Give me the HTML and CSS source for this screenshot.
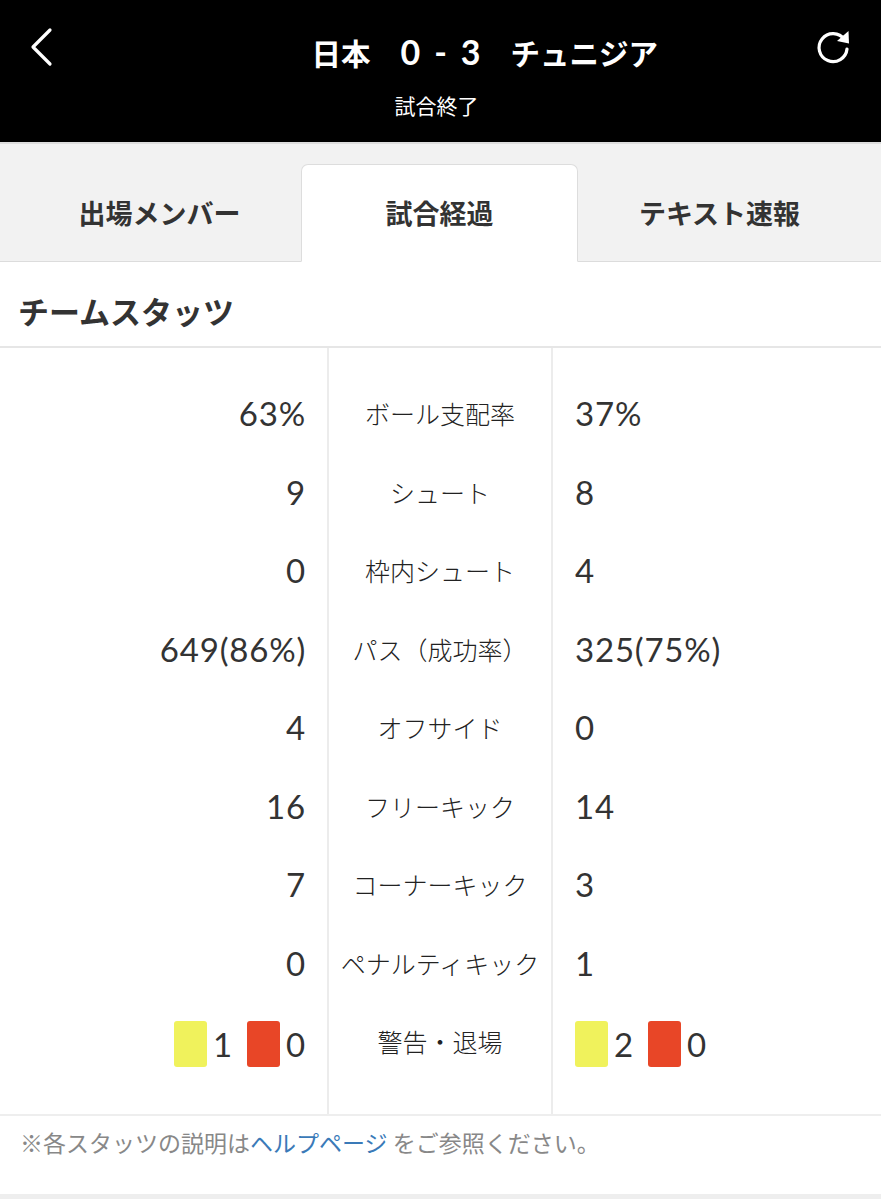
FILE: index.html
```html
<html>
<head>
    <title>日本 0-3 チュニジア</title>
    <link rel="stylesheet" href="styles.css">
</head>
<body>
<div class="header">
    <a class="back-btn">
        <svg width="40" height="50" viewBox="0 0 40 50">
            <polyline points="29,13 12,30 29,47" fill="none" stroke="#fff" stroke-width="3.2" stroke-linecap="round" stroke-linejoin="round"/>
        </svg>
    </a>
    <div class="match">
        <div class="score-line">
            <span class="team home">日本</span>
            <span class="score">0<i>-</i>3</span>
            <span class="team away">チュニジア</span>
        </div>
        <div class="status">試合終了</div>
    </div>
    <a class="reload-btn">
        <svg width="44" height="44" viewBox="0 0 44 44">
            <path d="M33.5 15.5 A14 14 0 1 0 36 25" fill="none" stroke="#fff" stroke-width="3.2" stroke-linecap="round"/>
            <polygon points="37.5,7 38,19.5 26,17" fill="#fff"/>
        </svg>
    </a>
</div>
<div class="tabs">
    <div class="tab">出場メンバー</div>
    <div class="tab active">試合経過</div>
    <div class="tab">テキスト速報</div>
</div>
<div class="section-title">チームスタッツ</div>
<div class="stats">
    <div class="col col-home">
        <div class="cell">63%</div>
        <div class="cell">9</div>
        <div class="cell">0</div>
        <div class="cell">649(86%)</div>
        <div class="cell">4</div>
        <div class="cell">16</div>
        <div class="cell">7</div>
        <div class="cell">0</div>
        <div class="cell card-cell">
            <span class="card yellow"></span><span>1</span>
            <span class="card red"></span><span>0</span>
        </div>
    </div>
    <div class="col col-label">
        <div class="cell">ボール支配率</div>
        <div class="cell">シュート</div>
        <div class="cell">枠内シュート</div>
        <div class="cell">パス（成功率）</div>
        <div class="cell">オフサイド</div>
        <div class="cell">フリーキック</div>
        <div class="cell">コーナーキック</div>
        <div class="cell">ペナルティキック</div>
        <div class="cell card-cell">警告・退場</div>
    </div>
    <div class="col col-away">
        <div class="cell">37%</div>
        <div class="cell">8</div>
        <div class="cell">4</div>
        <div class="cell">325(75%)</div>
        <div class="cell">0</div>
        <div class="cell">14</div>
        <div class="cell">3</div>
        <div class="cell">1</div>
        <div class="cell card-cell">
            <span class="card yellow"></span><span>2</span>
            <span class="card red"></span><span>0</span>
        </div>
    </div>
</div>
<div class="note">※各スタッツの説明は<a href="#">ヘルプページ</a> をご参照ください。</div>
<div class="bottom-bar"></div>
</body>
</html>
```

FILE: styles.css
```css
body{
    margin: 0;
    background: #fff;
    font-family: "Noto Sans CJK JP", sans-serif;
    color: #333;
}
.header{
    background: #000;
    height: 142px;
    display: flex;
    align-items: flex-start;
    justify-content: space-between;
    color: #fff;
}
.back-btn{
    display: block;
    margin: 17px 0 0 21px;
    width: 70px;
}
.reload-btn{
    display: block;
    margin: 24px 26px 0 0;
    width: 44px;
    text-align: right;
}
/* stretched back to full page width so everything centres on the page */
.match{
    flex: 1;
    padding-top: 27px;
    margin: 0 -70px 0 -91px;
}
.score-line{
    display: grid;
    grid-template-columns: 1fr auto 1fr;
    align-items: center;
    column-gap: 30px;
    font-size: 29.5px;
    font-weight: 700;
    line-height: 50px;
}
.team.home{
    text-align: right;
}
.team.away{
    text-align: left;
}
.score{
    font-family: Lato, "Noto Sans CJK JP", sans-serif;
    font-size: 34px;
    font-weight: 700;
}
.score i{
    font-style: normal;
    padding: 0 14px;
}
.status{
    text-align: center;
    font-size: 21px;
    line-height: 30px;
    margin-top: 13px;
    padding-right: 8px;
}
.tabs{
    background: #f2f2f2;
    border-top: 2px solid #ddd;
    border-bottom: 1px solid #dcdcdc;
    height: 117px;
    padding: 0 23px 0 21px;
    display: grid;
    grid-template-columns: 277px 277px 277px;
    justify-content: space-between;
    align-items: end;
}
.tab{
    height: 98px;
    margin-bottom: -1px;
    display: flex;
    align-items: center;
    justify-content: center;
    font-size: 27px;
    font-weight: 700;
    color: #333;
    padding-bottom: 1px;
    box-sizing: border-box;
}
.tab.active{
    background: #fff;
    border: 1px solid #ddd;
    border-bottom: 1px solid #fff;
    border-radius: 7px 7px 0 0;
}
.section-title{
    font-size: 31px;
    font-weight: 700;
    color: #333;
    padding: 0 18px;
    height: 84px;
    line-height: 98px;
    border-bottom: 2px solid #e6e6e6;
}
.stats{
    display: flex;
    border-bottom: 2px solid #eee;
}
.col{
    padding: 26px 0 28px;
}
.col-home{
    width: 329px;
    text-align: right;
    box-sizing: border-box;
    padding-right: 21px;
    border-right: 2px solid #ececec;
}
.col-label{
    width: 222px;
    text-align: center;
    border-right: 2px solid #ececec;
}
.col-away{
    flex: 1;
    padding-left: 22px;
}
.cell{
    height: 78.5px;
    line-height: 78px;
    font-family: Lato, "Noto Sans CJK JP", sans-serif;
    font-size: 33px;
    font-weight: 400;
    letter-spacing: 0.8px;
    color: #333;
    white-space: nowrap;
}
.col-label .cell{
    font-family: "Noto Sans CJK JP", sans-serif;
    font-size: 25px;
    font-weight: 300;
    letter-spacing: 0;
    color: #222;
    margin: 0 -6px;
}
.cell.card-cell{
    height: 84px;
    line-height: 84px;
    display: flex;
    align-items: center;
    gap: 6px;
}
.col-home .card-cell{
    justify-content: flex-end;
}
.col-label .card-cell{
    justify-content: center;
    line-height: 78px;
    align-items: flex-start;
}
.card{
    display: inline-block;
    width: 33px;
    height: 46px;
    border-radius: 3px;
}
.card.red{
    margin-left: 8px;
}
.yellow{
    background: #f0f25c;
}
.red{
    background: #e84627;
}
.note{
    padding: 0 20px;
    height: 78px;
    line-height: 52px;
    font-size: 23px;
    color: #888;
    border-bottom: 8px solid #eee;
}
.note a{
    color: #3a7ab8;
    text-decoration: none;
}
.bottom-bar{
    height: 10px;
}
```
